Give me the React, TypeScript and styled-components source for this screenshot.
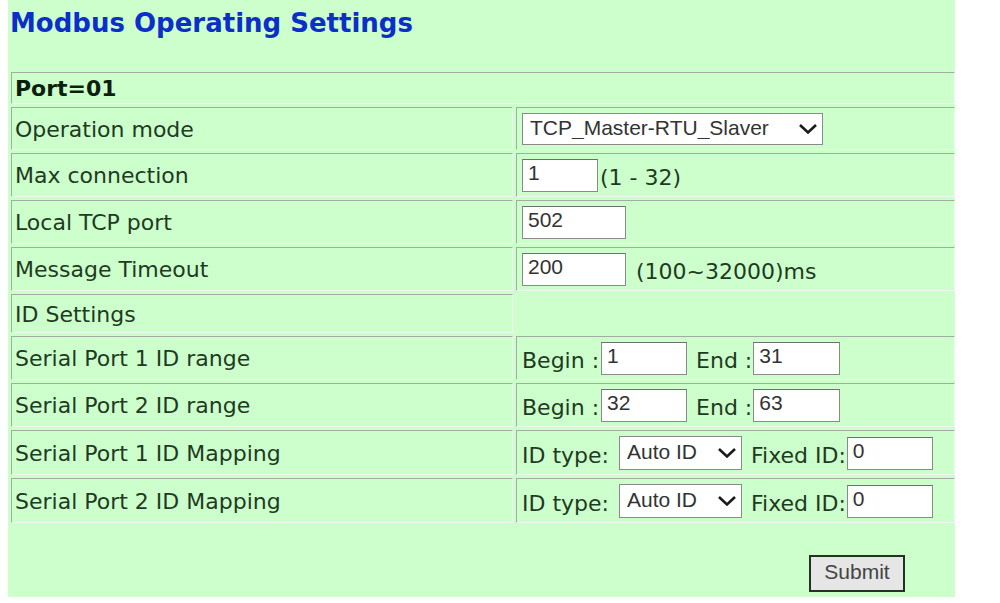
import React from "react";
import styled, { createGlobalStyle } from "styled-components";

const GlobalStyle = createGlobalStyle`
  html, body { margin: 0; padding: 0; background: #ffffff; }
  body { padding: 0 0 0 8px; }
`;

const Panel = styled.div`
  width: 947px;
  height: 597px;
  background: #ccffcc;
  box-sizing: border-box;
  padding: 5px 0 0 0;
  font-family: "DejaVu Sans", Verdana, sans-serif;
  color: #1f3a22;
  display: flex;
  flex-direction: column;
`;

const Title = styled.h1`
  margin: 0 0 0 2px;
  font-family: "DejaVu Sans", Verdana, sans-serif;
  font-size: 26px;
  line-height: 36px;
  font-weight: bold;
  color: #0b2fc8;
`;

const Table = styled.table`
  margin-top: 28px;
  width: 950px;
  border-spacing: 3px;
  border-collapse: separate;
`;

const Cell = styled.td<{ $head?: boolean; $empty?: boolean; $tall?: boolean; $w?: number }>`
  border-style: solid;
  border-width: ${(p) => (p.$empty ? "0" : "1px")};
  border-color: #9fae9f #eef8ee #eef8ee #9fae9f;
  padding: ${(p) => (p.$head ? "3px 3px 2px" : p.$tall ? "7px 3px 5px" : "5px 3px 4px")};
  font-size: 22px;
  font-weight: ${(p) => (p.$head ? "bold" : "normal")};
  color: ${(p) => (p.$head ? "#0c1f0e" : "#1f3a22")};
  vertical-align: middle;
  white-space: nowrap;
  ${(p) => (p.$w ? `width: ${p.$w}px;` : "")}
`;

const Line = styled.div`
  display: flex;
  align-items: flex-end;
`;

const Note = styled.span<{ $ml?: number }>`
  margin-left: ${(p) => p.$ml ?? 0}px;
  font-size: 22px;
  line-height: 28px;
`;

const Caption = styled.span<{ $ml?: number; $mr?: number }>`
  margin-left: ${(p) => p.$ml ?? 0}px;
  margin-right: ${(p) => p.$mr ?? 0}px;
  font-size: 22px;
  line-height: 26px;
  padding-bottom: 1px;
`;

const TextBox = styled.input<{ $w: number }>`
  width: ${(p) => p.$w}px;
  height: 33px;
  box-sizing: border-box;
  margin: 0;
  padding: 0 4px 5px 5px;
  border: 1px solid #8a8a8a;
  border-top-color: #6f6f6f;
  background: #ffffff;
  font-family: "Liberation Sans", Arial, sans-serif;
  font-size: 21px;
  color: #333333;
  outline: none;
`;

const SelectWrap = styled.span<{ $w: number; $h: number }>`
  position: relative;
  display: inline-flex;
  width: ${(p) => p.$w}px;
  height: ${(p) => p.$h}px;
`;

const Select = styled.select`
  appearance: none;
  -webkit-appearance: none;
  width: 100%;
  height: 100%;
  box-sizing: border-box;
  margin: 0;
  padding: 0 30px 3px 7px;
  border: 1px solid #8a8a8a;
  border-radius: 0;
  background: #ffffff;
  font-family: "Liberation Sans", Arial, sans-serif;
  font-size: 21px;
  color: #333333;
  outline: none;
`;

const Chevron = styled.svg`
  position: absolute;
  right: 5px;
  top: 50%;
  margin-top: -6px;
  pointer-events: none;
`;

const Footer = styled.div`
  display: flex;
  justify-content: flex-end;
  padding: 29px 50px 0 0;
`;

const SubmitButton = styled.button`
  width: 96px;
  height: 37px;
  box-sizing: border-box;
  border: 2px solid #243226;
  background: #e6e6e6;
  font-family: "Liberation Sans", Arial, sans-serif;
  font-size: 21px;
  color: #444444;
  padding: 0 0 4px 0;
  cursor: pointer;
`;

function DropDown({ w, h, value, options }: { w: number; h: number; value: string; options: string[] }) {
  return (
    <SelectWrap $w={w} $h={h}>
      <Select defaultValue={value}>
        {options.map((o) => (
          <option key={o}>{o}</option>
        ))}
      </Select>
      <Chevron width="20" height="12" viewBox="0 0 20 12">
        <path d="M2 2 L10 9.5 L18 2" fill="none" stroke="#1a1a1a" strokeWidth="2.6" />
      </Chevron>
    </SelectWrap>
  );
}

function Range({ begin, end }: { begin: string; end: string }) {
  return (
    <Line>
      <Caption $ml={2} $mr={2}>Begin :</Caption>
      <TextBox $w={86} defaultValue={begin} />
      <Caption $ml={9} $mr={1}>End :</Caption>
      <TextBox $w={87} defaultValue={end} />
    </Line>
  );
}

function Mapping() {
  return (
    <Line>
      <Caption $ml={2} $mr={10}>ID type:</Caption>
      <DropDown w={123} h={34} value="Auto ID" options={["Auto ID", "Fixed ID"]} />
      <Caption $ml={9} $mr={1}>Fixed ID:</Caption>
      <TextBox $w={86} defaultValue="0" />
    </Line>
  );
}

export default function App() {
  return (
    <>
      <GlobalStyle />
      <Panel>
        <Title>Modbus Operating Settings</Title>
        <Table>
          <tbody>
            <tr>
              <Cell $head colSpan={2}>Port=01</Cell>
            </tr>
            <tr>
              <Cell $w={494}>Operation mode</Cell>
              <Cell>
                <Line>
                  <Caption $ml={2} />
                  <DropDown
                    w={301}
                    h={32}
                    value="TCP_Master-RTU_Slaver"
                    options={["TCP_Master-RTU_Slaver", "TCP_Slaver-RTU_Master"]}
                  />
                </Line>
              </Cell>
            </tr>
            <tr>
              <Cell>Max connection</Cell>
              <Cell>
                <Line>
                  <Caption $ml={2} />
                  <TextBox $w={76} defaultValue="1" />
                  <Note $ml={2}>(1 - 32)</Note>
                </Line>
              </Cell>
            </tr>
            <tr>
              <Cell>Local TCP port</Cell>
              <Cell>
                <Line>
                  <Caption $ml={2} />
                  <TextBox $w={104} defaultValue="502" />
                </Line>
              </Cell>
            </tr>
            <tr>
              <Cell>Message Timeout</Cell>
              <Cell>
                <Line>
                  <Caption $ml={2} />
                  <TextBox $w={104} defaultValue="200" />
                  <Note $ml={10}>(100~32000)ms</Note>
                </Line>
              </Cell>
            </tr>
            <tr>
              <Cell $tall>ID Settings</Cell>
              <Cell $empty />
            </tr>
            <tr>
              <Cell>Serial Port 1 ID range</Cell>
              <Cell>
                <Range begin="1" end="31" />
              </Cell>
            </tr>
            <tr>
              <Cell>Serial Port 2 ID range</Cell>
              <Cell>
                <Range begin="32" end="63" />
              </Cell>
            </tr>
            <tr>
              <Cell>Serial Port 1 ID Mapping</Cell>
              <Cell>
                <Mapping />
              </Cell>
            </tr>
            <tr>
              <Cell>Serial Port 2 ID Mapping</Cell>
              <Cell>
                <Mapping />
              </Cell>
            </tr>
          </tbody>
        </Table>
        <Footer>
          <SubmitButton type="button">Submit</SubmitButton>
        </Footer>
      </Panel>
    </>
  );
}
